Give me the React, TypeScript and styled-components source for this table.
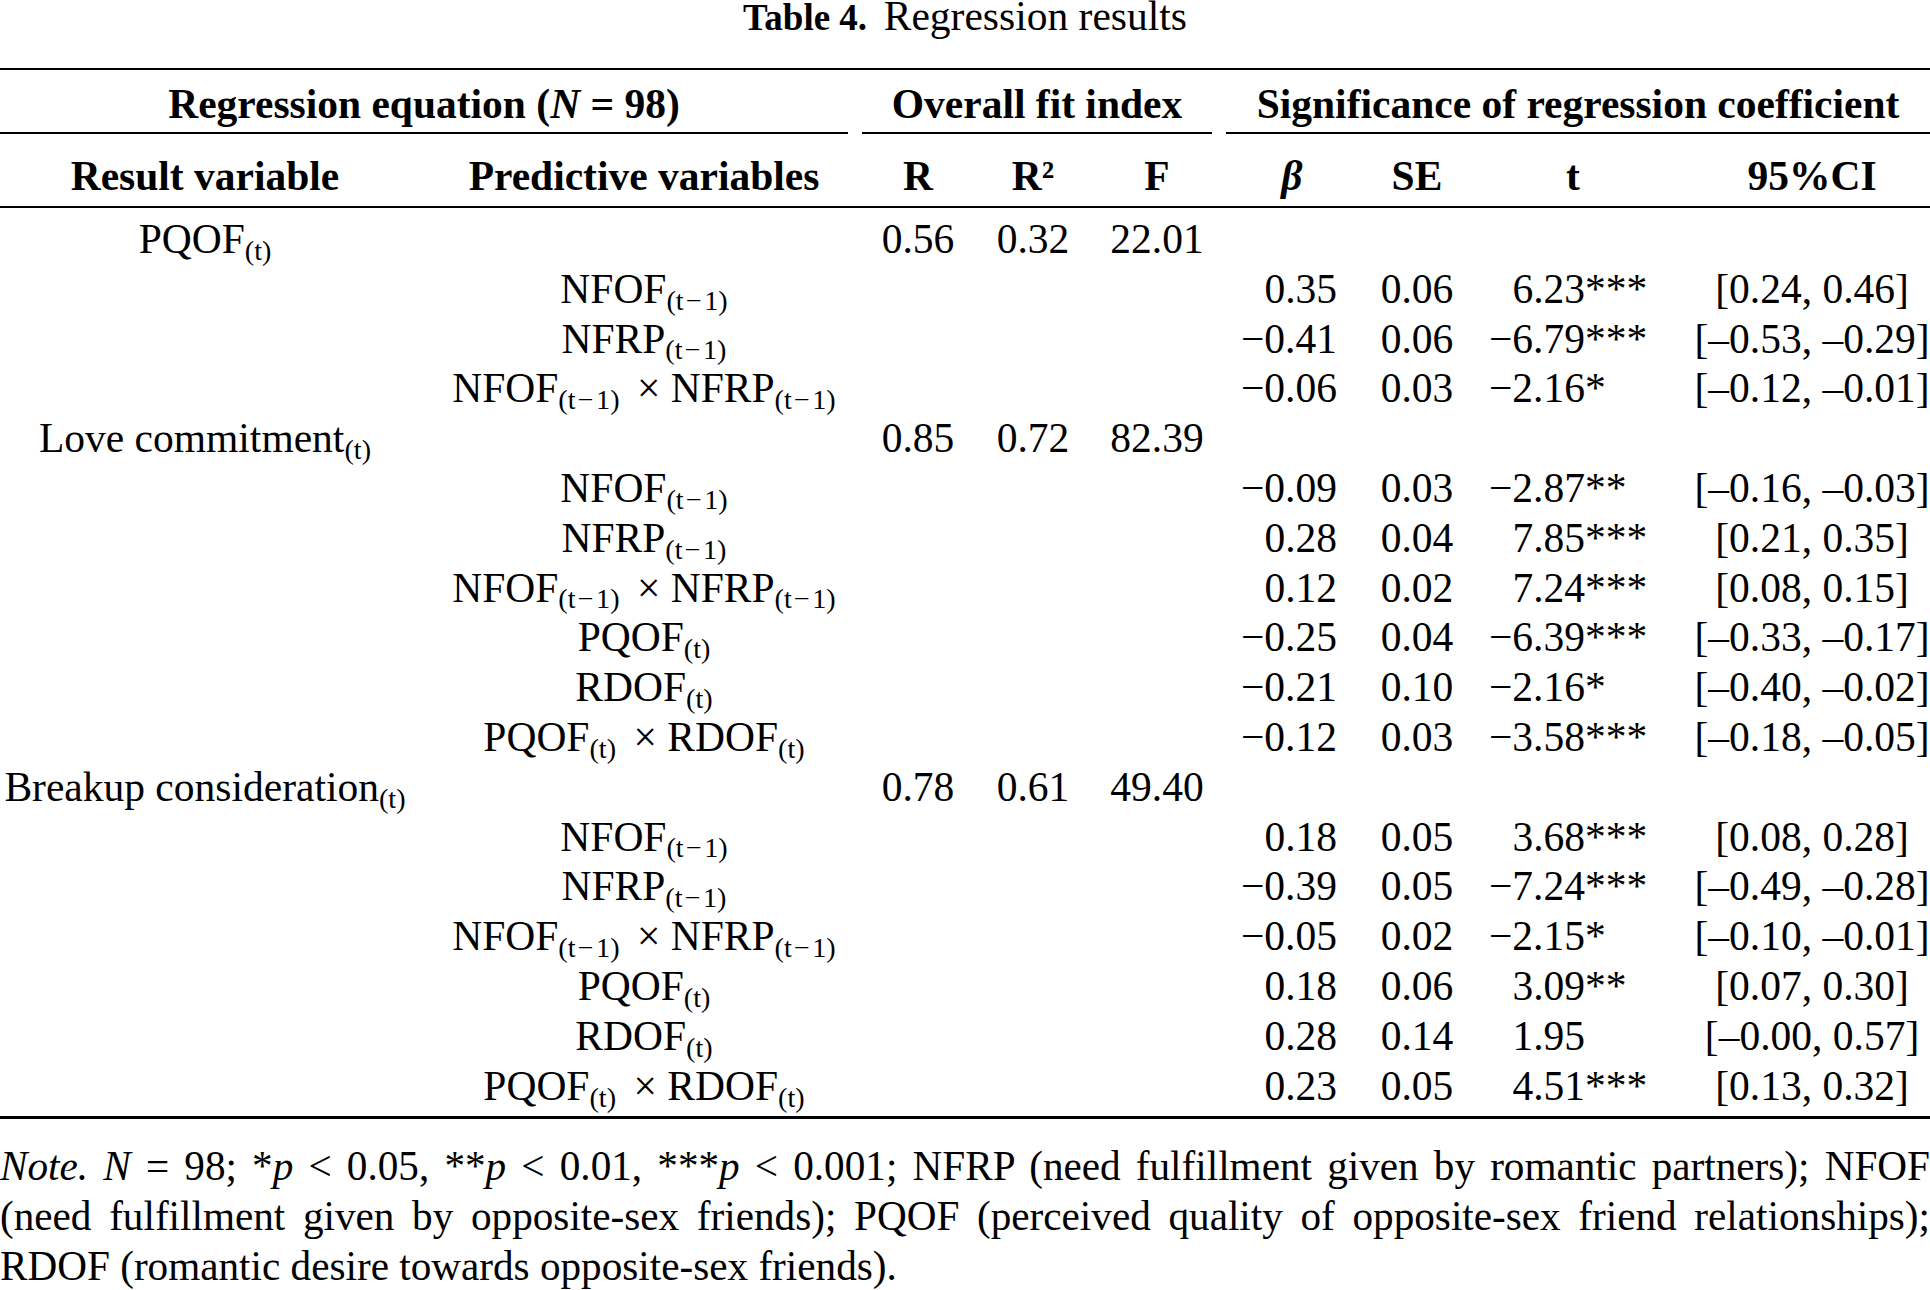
import React from 'react';
import styled, { createGlobalStyle } from 'styled-components';

const GlobalStyle = createGlobalStyle`
  html, body {
    margin: 0;
    padding: 0;
    background: #fff;
  }

  body {
    color: #000;
    font-family: 'Liberation Serif', 'Times New Roman', Times, serif;
  }
`;

const Styled = {
  Page: styled.div`
    width: 1930px;
  `,

  Caption: styled.div`
    height: 34px;
    font-size: 41.5px;
    line-height: 30px;
    text-align: center;
    margin-bottom: 34px;
    padding-top: 1px;
    box-sizing: border-box;
  `,

  CaptionLabel: styled.b`
    font-size: 37px;
    line-height: 30px;
    font-weight: 700;
    margin-right: 0.45em;
  `,

  Table: styled.table`
    width: 1930px;
    table-layout: fixed;
    border-collapse: separate;
    border-spacing: 0;
    border-top: 2px solid #000;
    font-size: 41.5px;
  `,

  GroupCell: styled.th`
    padding: 0;
    font-weight: 700;
  `,

  GroupLabel: styled.div<{ $left?: number; $right?: number }>`
    margin: 0 ${({ $right }) => $right ?? 0}px 0 ${({ $left }) => $left ?? 0}px;
    padding: 12px 0 6px;
    line-height: 44px;
    border-bottom: 2px solid #000;
    text-align: center;
    white-space: nowrap;
  `,

  HeadCell: styled.th<{ $padLeft?: number; $padRight?: number }>`
    padding: 20px ${({ $padRight }) => $padRight ?? 0}px 8px ${({ $padLeft }) => $padLeft ?? 0}px;
    line-height: 44px;
    font-weight: 700;
    text-align: center;
    white-space: nowrap;
    border-bottom: 2px solid #000;
  `,

  Cell: styled.td<{ $align?: 'left' | 'center' | 'right'; $padLeft?: number; $padRight?: number }>`
    padding: 0 ${({ $padRight }) => $padRight ?? 0}px 0 ${({ $padLeft }) => $padLeft ?? 0}px;
    line-height: 49.8px;
    text-align: ${({ $align }) => $align ?? 'center'};
    white-space: nowrap;
    vertical-align: top;

    tr:first-child > & {
      padding-top: 7px;
    }

    tr:last-child > & {
      padding-bottom: 5px;
      border-bottom: 3px solid #000;
    }
  `,

  TValue: styled.div`
    display: grid;
    grid-template-columns: 105px auto;
  `,

  TNumber: styled.span`
    justify-self: end;
  `,

  Sub: styled.sub`
    font-size: 0.68em;
    line-height: 0;
    vertical-align: -0.24em;
  `,

  SubMinus: styled.span`
    margin: 0 0.08em;
  `,

  Times: styled.span`
    margin: 0 0.25em 0 0.42em;
  `,

  Note: styled.div`
    margin-top: 22px;
    font-size: 41.2px;
    line-height: 50px;
  `,

  NoteLine: styled.div<{ $justify?: boolean }>`
    white-space: nowrap;
    text-align: ${({ $justify }) => ($justify ? 'justify' : 'left')};
    text-align-last: ${({ $justify }) => ($justify ? 'justify' : 'left')};
  `,
};

const columns = [410, 452, 112, 118, 130, 132, 126, 214, 236];

const MINUS = '\u2212';
const DASH = '\u2013';

function Term({ name, lag }: { name: string; lag?: boolean }) {
  return (
    <>
      {name}
      <Styled.Sub>
        {lag ? (
          <>
            (t<Styled.SubMinus>{MINUS}</Styled.SubMinus>1)
          </>
        ) : (
          '(t)'
        )}
      </Styled.Sub>
    </>
  );
}

function Product({ a, b }: { a: React.ReactNode; b: React.ReactNode }) {
  return (
    <>
      {a}
      <Styled.Times>×</Styled.Times>
      {b}
    </>
  );
}

const NFOF = <Term name='NFOF' lag />;
const NFRP = <Term name='NFRP' lag />;
const PQOF = <Term name='PQOF' />;
const RDOF = <Term name='RDOF' />;
const NFOFxNFRP = <Product a={NFOF} b={NFRP} />;
const PQOFxRDOF = <Product a={PQOF} b={RDOF} />;

type Coef = { b: string; se: string; t: string; stars?: string; ci: string };
type Row = { result?: React.ReactNode; predictor?: React.ReactNode; fit?: [string, string, string]; coef?: Coef };

const n = (v: string) => v.replace('-', MINUS);
const ci = (lo: string, hi: string) => `[${lo.replace('-', DASH)}, ${hi.replace('-', DASH)}]`;

const rows: Row[] = [
  { result: <Term name='PQOF' />, fit: ['0.56', '0.32', '22.01'] },
  { predictor: NFOF, coef: { b: '0.35', se: '0.06', t: '6.23', stars: '***', ci: ci('0.24', '0.46') } },
  { predictor: NFRP, coef: { b: n('-0.41'), se: '0.06', t: n('-6.79'), stars: '***', ci: ci('-0.53', '-0.29') } },
  { predictor: NFOFxNFRP, coef: { b: n('-0.06'), se: '0.03', t: n('-2.16'), stars: '*', ci: ci('-0.12', '-0.01') } },
  { result: <Term name='Love commitment' />, fit: ['0.85', '0.72', '82.39'] },
  { predictor: NFOF, coef: { b: n('-0.09'), se: '0.03', t: n('-2.87'), stars: '**', ci: ci('-0.16', '-0.03') } },
  { predictor: NFRP, coef: { b: '0.28', se: '0.04', t: '7.85', stars: '***', ci: ci('0.21', '0.35') } },
  { predictor: NFOFxNFRP, coef: { b: '0.12', se: '0.02', t: '7.24', stars: '***', ci: ci('0.08', '0.15') } },
  { predictor: PQOF, coef: { b: n('-0.25'), se: '0.04', t: n('-6.39'), stars: '***', ci: ci('-0.33', '-0.17') } },
  { predictor: RDOF, coef: { b: n('-0.21'), se: '0.10', t: n('-2.16'), stars: '*', ci: ci('-0.40', '-0.02') } },
  { predictor: PQOFxRDOF, coef: { b: n('-0.12'), se: '0.03', t: n('-3.58'), stars: '***', ci: ci('-0.18', '-0.05') } },
  { result: <Term name='Breakup consideration' />, fit: ['0.78', '0.61', '49.40'] },
  { predictor: NFOF, coef: { b: '0.18', se: '0.05', t: '3.68', stars: '***', ci: ci('0.08', '0.28') } },
  { predictor: NFRP, coef: { b: n('-0.39'), se: '0.05', t: n('-7.24'), stars: '***', ci: ci('-0.49', '-0.28') } },
  { predictor: NFOFxNFRP, coef: { b: n('-0.05'), se: '0.02', t: n('-2.15'), stars: '*', ci: ci('-0.10', '-0.01') } },
  { predictor: PQOF, coef: { b: '0.18', se: '0.06', t: '3.09', stars: '**', ci: ci('0.07', '0.30') } },
  { predictor: RDOF, coef: { b: '0.28', se: '0.14', t: '1.95', ci: ci('-0.00', '0.57') } },
  { predictor: PQOFxRDOF, coef: { b: '0.23', se: '0.05', t: '4.51', stars: '***', ci: ci('0.13', '0.32') } },
];

export default function App() {
  return (
    <Styled.Page>
      <GlobalStyle />
      <Styled.Caption>
        <Styled.CaptionLabel>Table 4.</Styled.CaptionLabel>
        Regression results
      </Styled.Caption>

      <Styled.Table>
        <colgroup>
          {columns.map((w, i) => (
            <col key={i} style={{ width: w }} />
          ))}
        </colgroup>
        <thead>
          <tr>
            <Styled.GroupCell colSpan={2}>
              <Styled.GroupLabel $right={14}>
                Regression equation (<i>N</i> = 98)
              </Styled.GroupLabel>
            </Styled.GroupCell>
            <Styled.GroupCell colSpan={3}>
              <Styled.GroupLabel $right={10}>Overall fit index</Styled.GroupLabel>
            </Styled.GroupCell>
            <Styled.GroupCell colSpan={4}>
              <Styled.GroupLabel $left={4}>Significance of regression coefficient</Styled.GroupLabel>
            </Styled.GroupCell>
          </tr>
          <tr>
            <Styled.HeadCell>Result variable</Styled.HeadCell>
            <Styled.HeadCell $padLeft={16}>Predictive variables</Styled.HeadCell>
            <Styled.HeadCell>R</Styled.HeadCell>
            <Styled.HeadCell>R²</Styled.HeadCell>
            <Styled.HeadCell>F</Styled.HeadCell>
            <Styled.HeadCell $padLeft={8}>
              <i>β</i>
            </Styled.HeadCell>
            <Styled.HeadCell>SE</Styled.HeadCell>
            <Styled.HeadCell $padRight={28}>t</Styled.HeadCell>
            <Styled.HeadCell>95%CI</Styled.HeadCell>
          </tr>
        </thead>
        <tbody>
          {rows.map((row, i) => (
            <tr key={i}>
              <Styled.Cell>{row.result}</Styled.Cell>
              <Styled.Cell $padLeft={16}>{row.predictor}</Styled.Cell>
              <Styled.Cell>{row.fit?.[0]}</Styled.Cell>
              <Styled.Cell>{row.fit?.[1]}</Styled.Cell>
              <Styled.Cell>{row.fit?.[2]}</Styled.Cell>
              <Styled.Cell $align='right' $padRight={17}>
                {row.coef?.b}
              </Styled.Cell>
              <Styled.Cell>{row.coef?.se}</Styled.Cell>
              <Styled.Cell $align='left'>
                {row.coef && (
                  <Styled.TValue>
                    <Styled.TNumber>{row.coef.t}</Styled.TNumber>
                    <span>{row.coef.stars}</span>
                  </Styled.TValue>
                )}
              </Styled.Cell>
              <Styled.Cell>{row.coef?.ci}</Styled.Cell>
            </tr>
          ))}
        </tbody>
      </Styled.Table>

      <Styled.Note>
        <Styled.NoteLine $justify>
          <i>Note.</i> <i>N</i> = 98; *<i>p</i> &lt; 0.05, **<i>p</i> &lt; 0.01, ***<i>p</i> &lt; 0.001; NFRP (need
          fulfillment given by romantic partners); NFOF
        </Styled.NoteLine>
        <Styled.NoteLine $justify>
          (need fulfillment given by opposite-sex friends); PQOF (perceived quality of opposite-sex friend
          relationships);
        </Styled.NoteLine>
        <Styled.NoteLine>RDOF (romantic desire towards opposite-sex friends).</Styled.NoteLine>
      </Styled.Note>
    </Styled.Page>
  );
}
